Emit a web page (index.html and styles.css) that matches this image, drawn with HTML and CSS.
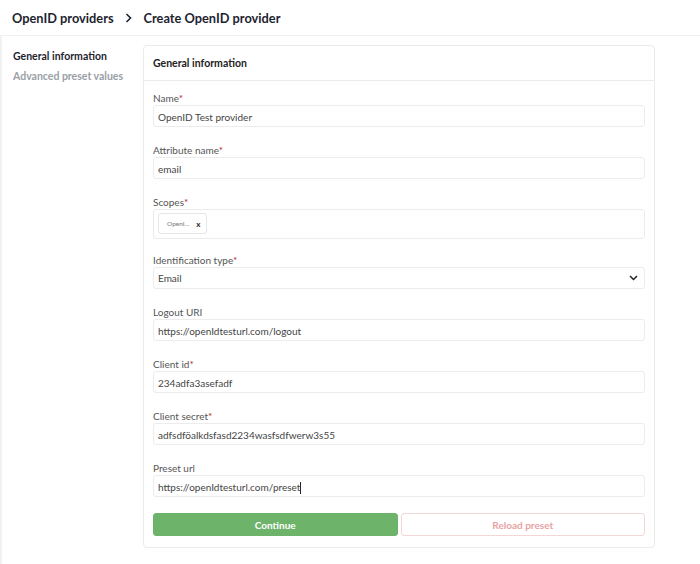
FILE: index.html
```html
<!DOCTYPE html>
<html>
<head>
    <title>Create OpenID provider</title>
    <link rel="stylesheet" href="styles.css">
</head>
<body>
    <div class="topbar">
        <span class="crumb">OpenID providers</span>
        <svg class="crumb-sep" width="7" height="10" viewBox="0 0 7 10"><path d="M1.5 1l4 4-4 4" fill="none" stroke="#1d2430" stroke-width="1.6"/></svg>
        <span class="crumb">Create OpenID provider</span>
    </div>

    <div class="page">
        <!-- menu bên trái -->
        <div class="side-nav">
            <div class="side-item active">General information</div>
            <div class="side-item">Advanced preset values</div>
        </div>

        <div class="card">
            <div class="card-head">General information</div>
            <div class="card-body">
                <div class="field">
                    <label>Name<span class="req">*</span></label>
                    <div class="input">OpenID Test provider</div>
                </div>
                <div class="field">
                    <label>Attribute name<span class="req">*</span></label>
                    <div class="input">email</div>
                </div>
                <div class="field scopes">
                    <label>Scopes<span class="req">*</span></label>
                    <div class="input tags">
                        <span class="chip">OpenI... <b>x</b></span>
                    </div>
                </div>
                <div class="field">
                    <label>Identification type<span class="req">*</span></label>
                    <div class="input select">
                        <span>Email</span>
                        <svg width="9" height="6" viewBox="0 0 9 6"><path d="M1 1l3.5 3.5L8 1" fill="none" stroke="#222" stroke-width="1.5"/></svg>
                    </div>
                </div>
                <div class="field">
                    <label>Logout URI</label>
                    <div class="input">https://openIdtesturl.com/logout</div>
                </div>
                <div class="field">
                    <label>Client id<span class="req">*</span></label>
                    <div class="input">234adfa3asefadf</div>
                </div>
                <div class="field">
                    <label>Client secret<span class="req">*</span></label>
                    <div class="input">adfsdföalkdsfasd2234wasfsdfwerw3s55</div>
                </div>
                <div class="field">
                    <label>Preset url</label>
                    <div class="input">https://openIdtesturl.com/preset<span class="caret"></span></div>
                </div>
                <div class="actions">
                    <button class="btn-continue">Continue</button>
                    <button class="btn-reload">Reload preset</button>
                </div>
            </div>
        </div>
    </div>
</body>
</html>
```

FILE: styles.css
```css
body {
    margin: 0;
    font-family: Lato, "Noto Sans", sans-serif;
    color: #222;
    background: #fff;
}

.topbar {
    height: 35px;
    display: flex;
    align-items: center;
    padding-left: 12px;
    border-bottom: 1px solid #efefef;
}
.crumb { font-size: 12.8px; font-weight: 700; color: #1d2430; }
.crumb-sep { margin: 0 12px 0 11px; }

.page {
    display: flex;
    border-left: 2px solid #f2f2f2;
    padding-top: 9px;
    min-height: calc(100vh - 36px);
    box-sizing: border-box;
}

.side-nav { width: 130px; padding: 1px 0 0 11px; }
.side-item { font-size: 10.5px; font-weight: 700; color: #9aa0a6; line-height: 20px; }
.side-item.active { color: #1d2430; }

.card {
    width: 510px;
    border: 1px solid #ebebeb;
    border-radius: 4px;
    align-self: flex-start;
}
.card-head {
    height: 34px;
    line-height: 34px;
    padding-left: 9px;
    font-size: 10.5px;
    font-weight: 700;
    border-bottom: 1px solid #ebebeb;
}
.card-body { padding: 10px 9px 11px 9px; }

.field { margin-bottom: 16px; }
.field label { display: block; font-size: 10px; color: #555; line-height: 14px; }
.req { color: #b3262e; }

.input {
    height: 22px;
    line-height: 22px;
    border: 1px solid #ececec;
    border-radius: 3px;
    padding: 0 4px;
    font-size: 10px;
    color: #444;
    box-sizing: border-box;
}
.input.tags { height: 30px; padding: 3px 4px; line-height: normal; }
.input.select { display: flex; justify-content: space-between; align-items: center; padding-right: 6px; }
.field.scopes { margin-bottom: 14px; }

.chip {
    display: inline-flex;
    align-items: center;
    gap: 7px;
    height: 21px;
    padding: 0 6px 0 8px;
    border: 1px solid #e6e6e6;
    border-radius: 3px;
    font-size: 6.5px;
    color: #777;
    box-sizing: border-box;
}
.chip b { font-size: 8px; color: #222; }

.caret { display: inline-block; width: 1px; height: 12px; background: #222; vertical-align: middle; }

.actions { display: flex; gap: 3px; }
.actions button {
    flex: 1;
    height: 23px;
    border-radius: 3px;
    font-family: inherit;
    font-size: 10px;
    font-weight: 700;
    cursor: pointer;
}
.btn-continue { background: #6db36a; border: 1px solid #6db36a; color: #fff; }
.btn-reload { background: #fff; border: 1px solid #f3d6d6; color: #e8a2a2; }
```
